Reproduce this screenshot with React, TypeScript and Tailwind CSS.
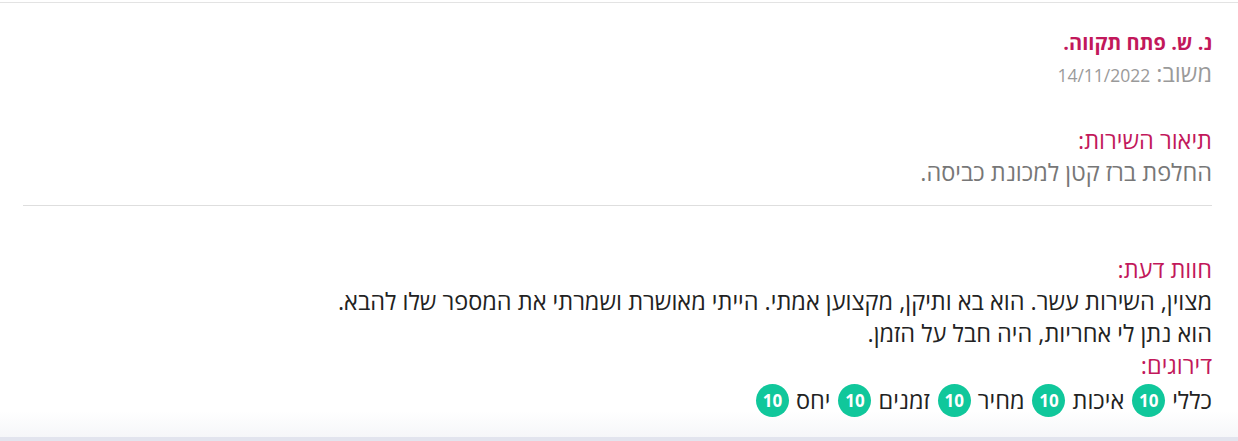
import React from "react";

const ratings = [
  { label: "כללי", value: 10 },
  { label: "איכות", value: 10 },
  { label: "מחיר", value: 10 },
  { label: "זמנים", value: 10 },
  { label: "יחס", value: 10 },
];

export default function App() {
  return (
    <div
      dir="rtl"
      className="relative h-[441px] w-[1238px] overflow-hidden bg-white"
      style={{ fontFamily: '"Open Sans", "Noto Sans", "DejaVu Sans", sans-serif' }}
    >
      <div className="absolute bottom-0 left-0 right-0 h-[30px] bg-gradient-to-b from-white to-[#f4f5f8]" />
      <div className="absolute bottom-0 left-0 right-0 h-[4px] bg-[#e2e4ee]" />
      <div className="relative">
        <div className="mt-[2px] border-t border-[#e3e3e3]" />
        <div className="pr-[26px] pl-[26px]">
          <div className="pt-[25px] text-[20px] font-bold leading-[30px] text-[#c2185b]">נ. ש. פתח תקווה.</div>
          <div className="text-[23.5px] leading-[30px] text-[#9a9a9a]">
            משוב: <span className="text-[17.5px]">14/11/2022</span>
          </div>
          <div className="mt-[34px] text-[23.5px] leading-[32px] text-[#c2185b]">תיאור השירות:</div>
          <div className="text-[23.5px] leading-[32px] text-[#777]">החלפת ברז קטן למכונת כביסה.</div>
        </div>
        <div className="mt-[17px] mr-[26px] ml-[23px] border-t border-[#dedede]" />
        <div className="pr-[26px] pl-[26px]">
          <div className="mt-[47px] text-[23.5px] leading-[32px] text-[#c2185b]">חוות דעת:</div>
          <div className="text-[23.5px] leading-[32px] text-[#222]">
            מצוין, השירות עשר. הוא בא ותיקן, מקצוען אמתי. הייתי מאושרת ושמרתי את המספר שלו להבא.
          </div>
          <div className="text-[23.5px] leading-[32px] text-[#222]">הוא נתן לי אחריות, היה חבל על הזמן.</div>
          <div className="text-[23.5px] leading-[32px] text-[#c2185b]">דירוגים:</div>
          <div className="mt-[2px] flex items-center gap-[8px] text-[23.5px] leading-[34px] text-[#222]">
            {ratings.map((r) => (
              <div key={r.label} className="flex items-center gap-[7px]">
                <span>{r.label}</span>
                <span className="flex h-[33px] w-[33px] shrink-0 items-center justify-center rounded-full bg-[#10c79b] text-[17px] font-bold leading-none text-white">
                  {r.value}
                </span>
              </div>
            ))}
          </div>
        </div>
      </div>
    </div>
  );
}
